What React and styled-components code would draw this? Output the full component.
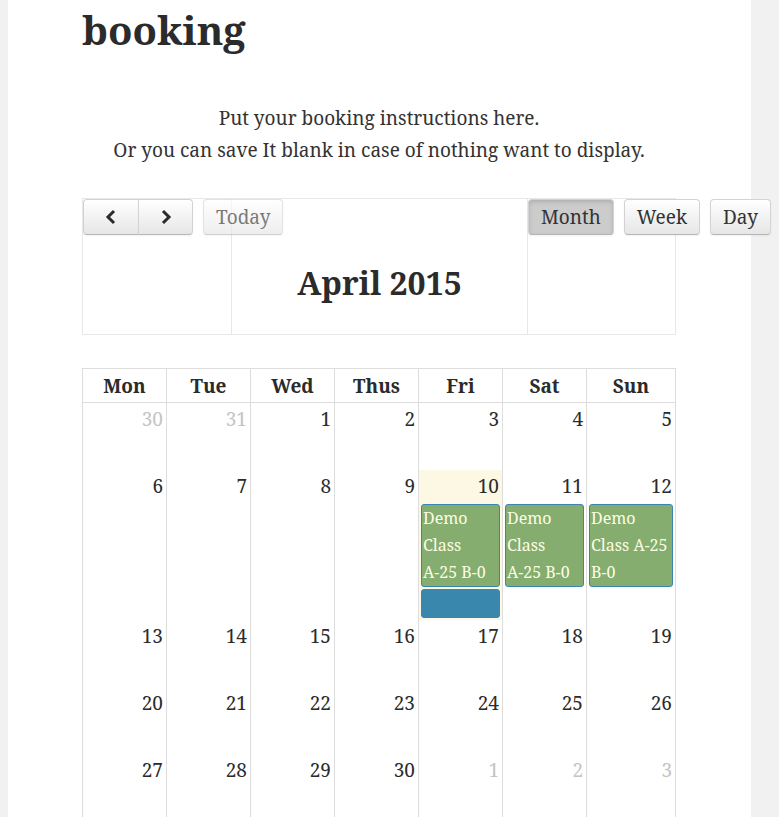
import React from 'react';
import styled, { createGlobalStyle } from 'styled-components';

const GlobalStyle = createGlobalStyle`
  body {
    margin: 0;
    background: #f1f1f1;
    font-family: "Noto Serif", "DejaVu Serif", serif;
    color: #333;
  }
`;

const Page = styled.div`
  margin-left: 8px;
  width: 743px;
  min-height: 817px;
  background: #fff;
`;

const Content = styled.div`
  margin-left: 74px;
  width: 594px;
`;

const Title = styled.h1`
  margin: 0;
  padding-top: 2px;
  font-size: 40px;
  line-height: 56px;
  font-weight: bold;
  color: #2b2b2b;
`;

const Intro = styled.div`
  margin-top: 44px;
  text-align: center;
  font-size: 19px;
  line-height: 32px;
  color: #333;
  p {
    margin: 0;
  }
`;

const Toolbar = styled.div`
  margin-top: 32px;
  display: grid;
  grid-template-columns: 148px 296px 1fr;
  height: 137px;
  box-sizing: border-box;
  border: 1px solid #e8e8e8;
`;

const ToolCell = styled.div`
  display: flex;
  align-items: flex-start;
  justify-content: ${({ center }) => (center ? 'center' : 'flex-start')};
  gap: 10px;
  border-left: ${({ divider }) => (divider ? '1px solid #e8e8e8' : 'none')};
  white-space: nowrap;
`;

const Group = styled.div`
  display: flex;
`;

const Button = styled.button`
  height: 36px;
  padding: 0 ${({ pad }) => (pad === undefined ? 12 : pad)}px;
  width: ${({ w }) => (w ? `${w}px` : 'auto')};
  font-family: inherit;
  font-size: 19px;
  color: #333;
  border: 1px solid #d3d3d3;
  border-bottom-color: #b5b5b5;
  background: ${({ active }) =>
    active ? '#cccccc' : 'linear-gradient(#ffffff, #e6e6e6)'};
  box-shadow: ${({ active }) =>
    active
      ? 'inset 0 2px 4px rgba(0,0,0,0.15), 0 1px 2px rgba(0,0,0,0.05)'
      : 'inset 0 1px 0 rgba(255,255,255,0.2), 0 1px 2px rgba(0,0,0,0.05)'};
  opacity: ${({ disabled }) => (disabled ? 0.65 : 1)};
  border-radius: ${({ shape }) =>
    shape === 'left' ? '4px 0 0 4px' : shape === 'right' ? '0 4px 4px 0' : '4px'};
  margin-left: ${({ shape }) => (shape === 'right' ? '-1px' : '0')};
  display: flex;
  align-items: center;
  justify-content: center;
  cursor: pointer;
`;

const MonthTitle = styled.h2`
  margin: 64px 0 0;
  font-size: 32px;
  line-height: 40px;
  font-weight: bold;
  color: #2b2b2b;
`;

const Calendar = styled.div`
  margin-top: 33px;
  border: 1px solid #ddd;
  border-bottom: none;
`;

const Row = styled.div`
  display: grid;
  grid-template-columns: repeat(6, 84px) 1fr;
`;

const HeadCell = styled.div`
  height: 34px;
  box-sizing: border-box;
  border-right: ${({ last }) => (last ? 'none' : '1px solid #ddd')};
  border-bottom: 1px solid #ddd;
  text-align: center;
  font-weight: bold;
  font-size: 19px;
  line-height: 34px;
  color: #2b2b2b;
`;

const DayCell = styled.div`
  min-height: 67px;
  box-sizing: border-box;
  border-right: ${({ last }) => (last ? 'none' : '1px solid #ddd')};
  background: ${({ today }) => (today ? '#fcf8e3' : '#fff')};
  padding: 3px 2px 2px 2px;
  display: flex;
  flex-direction: column;
  gap: 2px;
`;

const DayNum = styled.div`
  text-align: right;
  padding-right: 1px;
  margin-bottom: 3px;
  font-size: 19px;
  line-height: 26px;
  color: ${({ other }) => (other ? '#c4c4c4' : '#2b2b2b')};
`;

const Event = styled.div`
  background: ${({ bar }) => (bar ? '#3a87ad' : '#84ad6f')};
  border: 1px solid #3a87ad;
  border-radius: 3px;
  color: #fdfde4;
  font-size: 16px;
  line-height: 27px;
  padding: 0 1px;
  min-height: ${({ bar }) => (bar ? '27px' : 'auto')};
`;

const Chevron = ({ dir }) => (
  <svg width="14" height="18" viewBox="0 0 14 18">
    <path
      d={dir === 'left' ? 'M10 3 L4 9 L10 15' : 'M4 3 L10 9 L4 15'}
      fill="none"
      stroke="#2b2b2b"
      strokeWidth="3"
    />
  </svg>
);

const heads = ['Mon', 'Tue', 'Wed', 'Thus', 'Fri', 'Sat', 'Sun'];

const weeks = [
  [[30, 1], [31, 1], [1], [2], [3], [4], [5]],
  [[6], [7], [8], [9], [10, 0, 'today'], [11], [12]],
  [[13], [14], [15], [16], [17], [18], [19]],
  [[20], [21], [22], [23], [24], [25], [26]],
  [[27], [28], [29], [30], [1, 1], [2, 1], [3, 1]],
];

const events = {
  10: [['Demo', 'Class', 'A-25 B-0'], 'bar'],
  11: [['Demo', 'Class', 'A-25 B-0']],
  12: [['Demo', 'Class A-25', 'B-0']],
};

export default function App() {
  return (
    <>
      <GlobalStyle />
      <Page>
        <Content>
          <Title>booking</Title>
          <Intro>
            <p>Put your booking instructions here.</p>
            <p>Or you can save It blank in case of nothing want to display.</p>
          </Intro>
          <Toolbar>
            <ToolCell>
              <Group>
                <Button shape="left" pad={0} w={56}>
                  <Chevron dir="left" />
                </Button>
                <Button shape="right" pad={0} w={55}>
                  <Chevron dir="right" />
                </Button>
              </Group>
              <Button disabled>Today</Button>
            </ToolCell>
            <ToolCell center divider>
              <MonthTitle>April 2015</MonthTitle>
            </ToolCell>
            <ToolCell divider>
              <Button active>Month</Button>
              <Button>Week</Button>
              <Button>Day</Button>
            </ToolCell>
          </Toolbar>
          <Calendar>
            <Row>
              {heads.map((h, i) => (
                <HeadCell key={h} last={i === 6}>
                  {h}
                </HeadCell>
              ))}
            </Row>
            {weeks.map((week, wi) => (
              <Row key={wi}>
                {week.map(([n, other, today], di) => {
                  const ev = !other && wi === 1 ? events[n] : null;
                  return (
                    <DayCell key={di} today={today} last={di === 6}>
                      <DayNum other={other}>{n}</DayNum>
                      {ev &&
                        ev.map((e, ei) =>
                          e === 'bar' ? (
                            <Event key={ei} bar />
                          ) : (
                            <Event key={ei}>
                              {e.map((l) => (
                                <div key={l}>{l}</div>
                              ))}
                            </Event>
                          )
                        )}
                    </DayCell>
                  );
                })}
              </Row>
            ))}
          </Calendar>
        </Content>
      </Page>
    </>
  );
}
